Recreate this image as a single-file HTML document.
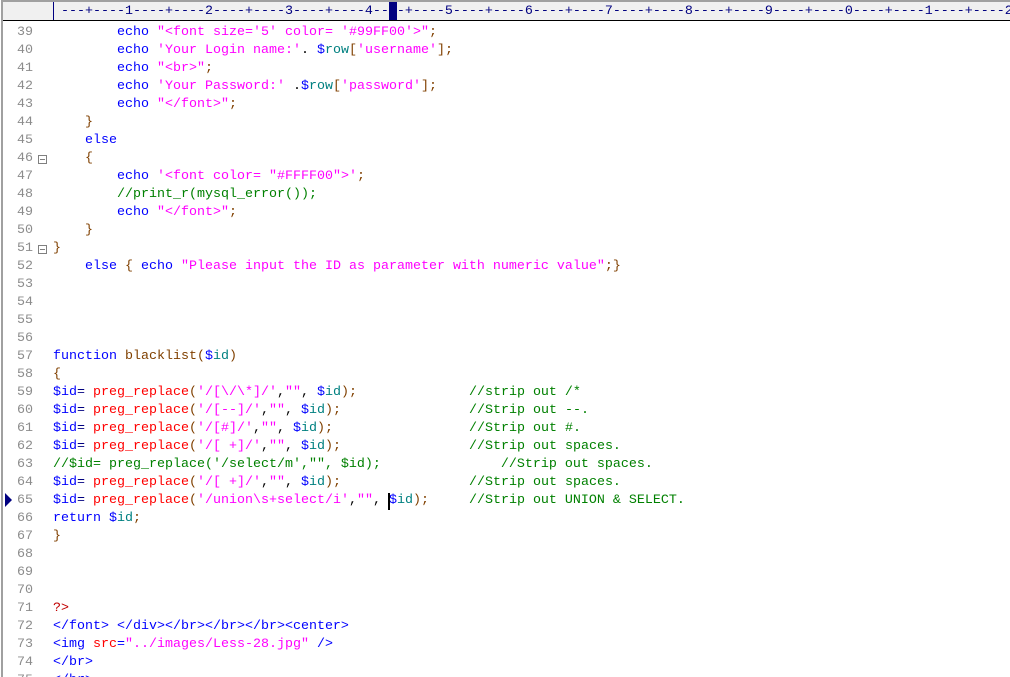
<!DOCTYPE html>
<html><head><meta charset="utf-8"><style>
html,body{margin:0;padding:0;background:#fff;width:1010px;height:677px;overflow:hidden}
body{position:relative;font-family:"Liberation Mono",monospace;font-size:13.33px}
#lb{position:absolute;left:0;top:0;width:3px;height:677px;background:#fff;border-right:2px solid #a0a0a0;box-sizing:border-box}
#rul{position:absolute;left:0;top:0;width:1010px;height:21px;background:#f0f0f0;border-top:2px solid #a0a0a0;border-bottom:1px solid #000;box-sizing:border-box}
#rt{position:absolute;left:53px;top:1px;white-space:pre;color:#000080;line-height:18px}
#rbar{position:absolute;left:53px;top:0;width:1px;height:18px;background:#000080}
#cur{position:absolute;left:389px;top:0;width:8px;height:18px;background:#000080}
.ln{position:absolute;left:0;width:33px;text-align:right;color:#8c8c8c;white-space:pre;line-height:18px;margin-top:2px}
.c{position:absolute;left:53px;white-space:pre;line-height:18px;color:#000;margin-top:2px}
.k{color:#0000ff}.s{color:#ff00ff}.f{color:#ff0000}.b{color:#804000}.d{color:#0000ff}.v{color:#008080}.g{color:#008000}.n{color:#000080}
.fold{position:absolute;left:38px;width:9px;height:9px;border:1px solid #808080;box-sizing:border-box;margin-top:2px}
.fold:after{content:"";position:absolute;left:1px;top:3px;width:5px;height:1px;background:#808080}
</style></head><body>
<div id="rul"><div id="rbar"></div><div id="rt"> ---+----1----+----2----+----3----+----4-- -+----5----+----6----+----7----+----8----+----9----+----0----+----1----+----2</div><div id="cur"></div></div>
<div id="lb"></div>
<div class="ln" style="top:22px">39</div><div class="c" style="top:22px">        <span class="k">echo</span> <span class="s">"&lt;font size='5' color= '#99FF00'&gt;"</span><span class="b">;</span></div>
<div class="ln" style="top:40px">40</div><div class="c" style="top:40px">        <span class="k">echo</span> <span class="s">'Your Login name:'</span>. <span class="d">$</span><span class="v">row</span><span class="b">[</span><span class="s">'username'</span><span class="b">];</span></div>
<div class="ln" style="top:58px">41</div><div class="c" style="top:58px">        <span class="k">echo</span> <span class="s">"&lt;br&gt;"</span><span class="b">;</span></div>
<div class="ln" style="top:76px">42</div><div class="c" style="top:76px">        <span class="k">echo</span> <span class="s">'Your Password:'</span> .<span class="d">$</span><span class="v">row</span><span class="b">[</span><span class="s">'password'</span><span class="b">];</span></div>
<div class="ln" style="top:94px">43</div><div class="c" style="top:94px">        <span class="k">echo</span> <span class="s">"&lt;/font&gt;"</span><span class="b">;</span></div>
<div class="ln" style="top:112px">44</div><div class="c" style="top:112px">    <span class="b">}</span></div>
<div class="ln" style="top:130px">45</div><div class="c" style="top:130px">    <span class="k">else</span></div>
<div class="ln" style="top:148px">46</div><div class="fold" style="top:153px"></div><div class="c" style="top:148px">    <span class="b">{</span></div>
<div class="ln" style="top:166px">47</div><div class="c" style="top:166px">        <span class="k">echo</span> <span class="s">'&lt;font color= "#FFFF00"&gt;'</span><span class="b">;</span></div>
<div class="ln" style="top:184px">48</div><div class="c" style="top:184px">        <span class="g">//print_r(mysql_error());</span></div>
<div class="ln" style="top:202px">49</div><div class="c" style="top:202px">        <span class="k">echo</span> <span class="s">"&lt;/font&gt;"</span><span class="b">;</span></div>
<div class="ln" style="top:220px">50</div><div class="c" style="top:220px">    <span class="b">}</span></div>
<div class="ln" style="top:238px">51</div><div class="fold" style="top:243px"></div><div class="c" style="top:238px"><span class="b">}</span></div>
<div class="ln" style="top:256px">52</div><div class="c" style="top:256px">    <span class="k">else</span> <span class="b">{</span> <span class="k">echo</span> <span class="s">"Please input the ID as parameter with numeric value"</span><span class="b">;}</span></div>
<div class="ln" style="top:274px">53</div>
<div class="ln" style="top:292px">54</div>
<div class="ln" style="top:310px">55</div>
<div class="ln" style="top:328px">56</div>
<div class="ln" style="top:346px">57</div><div class="c" style="top:346px"><span class="k">function</span> <span class="b">blacklist(</span><span class="d">$</span><span class="v">id</span><span class="b">)</span></div>
<div class="ln" style="top:364px">58</div><div class="c" style="top:364px"><span class="b">{</span></div>
<div class="ln" style="top:382px">59</div><div class="c" style="top:382px"><span class="d">$id</span><span class="n">=</span> <span class="f">preg_replace</span><span class="b">(</span><span class="s">'/[\/\*]/'</span>,<span class="s">""</span>, <span class="d">$</span><span class="v">id</span><span class="b">);</span>              <span class="g">//strip out /*</span></div>
<div class="ln" style="top:400px">60</div><div class="c" style="top:400px"><span class="d">$id</span><span class="n">=</span> <span class="f">preg_replace</span><span class="b">(</span><span class="s">'/[--]/'</span>,<span class="s">""</span>, <span class="d">$</span><span class="v">id</span><span class="b">);</span>                <span class="g">//Strip out --.</span></div>
<div class="ln" style="top:418px">61</div><div class="c" style="top:418px"><span class="d">$id</span><span class="n">=</span> <span class="f">preg_replace</span><span class="b">(</span><span class="s">'/[#]/'</span>,<span class="s">""</span>, <span class="d">$</span><span class="v">id</span><span class="b">);</span>                 <span class="g">//Strip out #.</span></div>
<div class="ln" style="top:436px">62</div><div class="c" style="top:436px"><span class="d">$id</span><span class="n">=</span> <span class="f">preg_replace</span><span class="b">(</span><span class="s">'/[ +]/'</span>,<span class="s">""</span>, <span class="d">$</span><span class="v">id</span><span class="b">);</span>                <span class="g">//Strip out spaces.</span></div>
<div class="ln" style="top:454px">63</div><div class="c" style="top:454px"><span class="g">//$id= preg_replace('/select/m',"", $id);               //Strip out spaces.</span></div>
<div class="ln" style="top:472px">64</div><div class="c" style="top:472px"><span class="d">$id</span><span class="n">=</span> <span class="f">preg_replace</span><span class="b">(</span><span class="s">'/[ +]/'</span>,<span class="s">""</span>, <span class="d">$</span><span class="v">id</span><span class="b">);</span>                <span class="g">//Strip out spaces.</span></div>
<div class="ln" style="top:490px">65</div><div class="c" style="top:490px"><span class="d">$id</span><span class="n">=</span> <span class="f">preg_replace</span><span class="b">(</span><span class="s">'/union\s+select/i'</span>,<span class="s">""</span>, <span class="d">$</span><span class="v">id</span><span class="b">);</span>     <span class="g">//Strip out UNION &amp; SELECT.</span></div>
<svg style="position:absolute;left:5px;top:493px" width="8" height="14"><polygon points="0,0 7,7 0,14" fill="#000080"/></svg>
<div style="position:absolute;left:388px;top:493px;width:2px;height:17px;background:#000"></div>
<div class="ln" style="top:508px">66</div><div class="c" style="top:508px"><span class="k">return</span> <span class="d">$</span><span class="v">id</span><span class="b">;</span></div>
<div class="ln" style="top:526px">67</div><div class="c" style="top:526px"><span class="b">}</span></div>
<div class="ln" style="top:544px">68</div>
<div class="ln" style="top:562px">69</div>
<div class="ln" style="top:580px">70</div>
<div class="ln" style="top:598px">71</div><div class="c" style="top:598px"><span style="color:#c00000">?&gt;</span></div>
<div class="ln" style="top:616px">72</div><div class="c" style="top:616px"><span class="k">&lt;/font&gt; &lt;/div&gt;&lt;/br&gt;&lt;/br&gt;&lt;/br&gt;&lt;center&gt;</span></div>
<div class="ln" style="top:634px">73</div><div class="c" style="top:634px"><span class="k">&lt;img</span> <span class="f">src</span><span class="k">=</span><span class="s">"../images/Less-28.jpg"</span> <span class="k">/&gt;</span></div>
<div class="ln" style="top:652px">74</div><div class="c" style="top:652px"><span class="k">&lt;/br&gt;</span></div>
<div class="ln" style="top:670px">75</div><div class="c" style="top:670px"><span class="k">&lt;/br&gt;</span></div>
</body></html>
